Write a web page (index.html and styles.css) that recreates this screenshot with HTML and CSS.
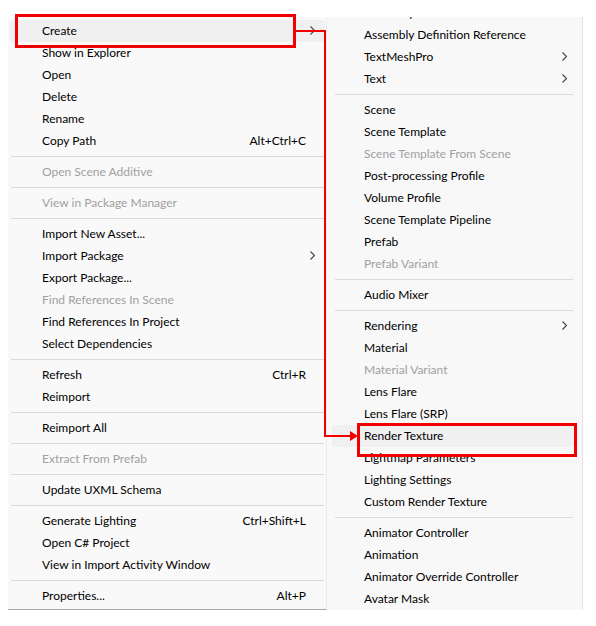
FILE: index.html
```html
<!DOCTYPE html>
<html lang="en">
<head>
<meta charset="utf-8">
<title>Project context menu</title>
<link rel="stylesheet" href="styles.css">
</head>
<body>
<div class="stage">
  <div class="menus">
    <ul class="menu main">
      <li class="item active">Create<span class="sub-arrow"><svg width="5" height="9" viewBox="0 0 5 9"><path d="M0.5 0.5 L4.5 4.5 L0.5 8.5" /></svg></span></li>
      <li class="item">Show in Explorer</li>
      <li class="item">Open</li>
      <li class="item">Delete</li>
      <li class="item">Rename</li>
      <li class="item">Copy Path<span class="key">Alt+Ctrl+C</span></li>
      <li class="sep"></li>
      <li class="item off">Open Scene Additive</li>
      <li class="sep"></li>
      <li class="item off">View in Package Manager</li>
      <li class="sep"></li>
      <li class="item">Import New Asset...</li>
      <li class="item">Import Package<span class="sub-arrow"><svg width="5" height="9" viewBox="0 0 5 9"><path d="M0.5 0.5 L4.5 4.5 L0.5 8.5" /></svg></span></li>
      <li class="item">Export Package...</li>
      <li class="item off">Find References In Scene</li>
      <li class="item">Find References In Project</li>
      <li class="item">Select Dependencies</li>
      <li class="sep"></li>
      <li class="item">Refresh<span class="key">Ctrl+R</span></li>
      <li class="item">Reimport</li>
      <li class="sep"></li>
      <li class="item">Reimport All</li>
      <li class="sep"></li>
      <li class="item off">Extract From Prefab</li>
      <li class="sep"></li>
      <li class="item">Update UXML Schema</li>
      <li class="sep"></li>
      <li class="item">Generate Lighting<span class="key">Ctrl+Shift+L</span></li>
      <li class="item">Open C# Project</li>
      <li class="item">View in Import Activity Window</li>
      <li class="sep"></li>
      <li class="item">Properties...<span class="key">Alt+P</span></li>
    </ul>
    <div class="menu sub">
      <ul class="sub-list">
        <li class="item">Assembly Definition</li>
        <li class="item">Assembly Definition Reference</li>
        <li class="item">TextMeshPro<span class="sub-arrow"><svg width="5" height="9" viewBox="0 0 5 9"><path d="M0.5 0.5 L4.5 4.5 L0.5 8.5" /></svg></span></li>
        <li class="item">Text<span class="sub-arrow"><svg width="5" height="9" viewBox="0 0 5 9"><path d="M0.5 0.5 L4.5 4.5 L0.5 8.5" /></svg></span></li>
        <li class="sep"></li>
        <li class="item">Scene</li>
        <li class="item">Scene Template</li>
        <li class="item off">Scene Template From Scene</li>
        <li class="item">Post-processing Profile</li>
        <li class="item">Volume Profile</li>
        <li class="item">Scene Template Pipeline</li>
        <li class="item">Prefab</li>
        <li class="item off">Prefab Variant</li>
        <li class="sep"></li>
        <li class="item">Audio Mixer</li>
        <li class="sep"></li>
        <li class="item">Rendering<span class="sub-arrow"><svg width="5" height="9" viewBox="0 0 5 9"><path d="M0.5 0.5 L4.5 4.5 L0.5 8.5" /></svg></span></li>
        <li class="item">Material</li>
        <li class="item off">Material Variant</li>
        <li class="item">Lens Flare</li>
        <li class="item">Lens Flare (SRP)</li>
        <li class="item active">Render Texture</li>
        <li class="item">Lightmap Parameters</li>
        <li class="item">Lighting Settings</li>
        <li class="item">Custom Render Texture</li>
        <li class="sep"></li>
        <li class="item">Animator Controller</li>
        <li class="item">Animation</li>
        <li class="item">Animator Override Controller</li>
        <li class="item">Avatar Mask</li>
      </ul>
    </div>
  </div>

  <!-- callout: Create -> Render Texture -->
  <div class="callout box-create"></div>
  <div class="callout box-render"></div>
  <svg class="connector" width="596" height="626" viewBox="0 0 596 626">
    <path d="M295 31 H325 V436 H352" />
    <polygon points="350,431 358,436 350,441" />
  </svg>
</div>
</body>
</html>
```

FILE: styles.css
```css
html, body {
  margin: 0;
  padding: 0;
  background: #ffffff;
}

.stage {
  position: relative;
  width: 596px;
  height: 626px;
  overflow: hidden;
  font-family: Lato, "Noto Sans", sans-serif;
  font-size: 12px;
  color: #000;
}

.menus {
  display: flex;
  align-items: flex-start;
  margin: 17px 0 0 8px;
  height: 593px;
  overflow: hidden;
}

ul {
  list-style: none;
  margin: 0;
  padding: 0;
}

.menu {
  background: #f9f9f9;
  box-sizing: border-box;
}

.main {
  width: 319px;
  height: 593px;
  padding: 3px 1px 3px 2px;
  border-right: 1px solid #ececec;
  border-bottom: 1px solid #a8a8a8;
}

.sub {
  width: 256px;
  height: 593px;
  border-right: 1px solid #e2e2e2;
  overflow: hidden;
  padding: 0 9px 0 5px;
  background: #f8f8f8;
}

.sub-list {
  margin-top: -15px;
}

.item {
  position: relative;
  display: flex;
  align-items: center;
  box-sizing: border-box;
  height: 22px;
  padding: 0 19px 2px 32px;
  border-radius: 4px;
  white-space: nowrap;
}

.item.active {
  background: #f0f0f0;
}

.item.off {
  color: #a0a0a0;
}

.key {
  margin-left: auto;
}

.sub-arrow {
  position: absolute;
  right: 10px;
  top: 6px;
  width: 5px;
  height: 9px;
  display: flex;
}

.sub .sub-arrow {
  right: 6px;
}

.sub-arrow path {
  fill: none;
  stroke: #444;
  stroke-width: 1.1;
}

.sep {
  height: 9px;
  display: flex;
  align-items: center;
  padding: 0 1px 0 1px;
}

.sep::before {
  content: "";
  flex: 1;
  height: 1px;
  background: #dadada;
}

.sub .sep {
  padding: 0 0 0 3px;
}

/* red annotation overlays */
.callout {
  position: absolute;
  border: 3px solid #f00000;
  box-sizing: border-box;
}

.box-create {
  left: 15px;
  top: 14px;
  width: 281px;
  height: 34px;
}

.box-render {
  left: 357px;
  top: 423px;
  width: 220px;
  height: 34px;
}

.connector {
  position: absolute;
  left: 0;
  top: 0;
}

.connector path {
  fill: none;
  stroke: #f00000;
  stroke-width: 2;
}

.connector polygon {
  fill: #f00000;
}
```
